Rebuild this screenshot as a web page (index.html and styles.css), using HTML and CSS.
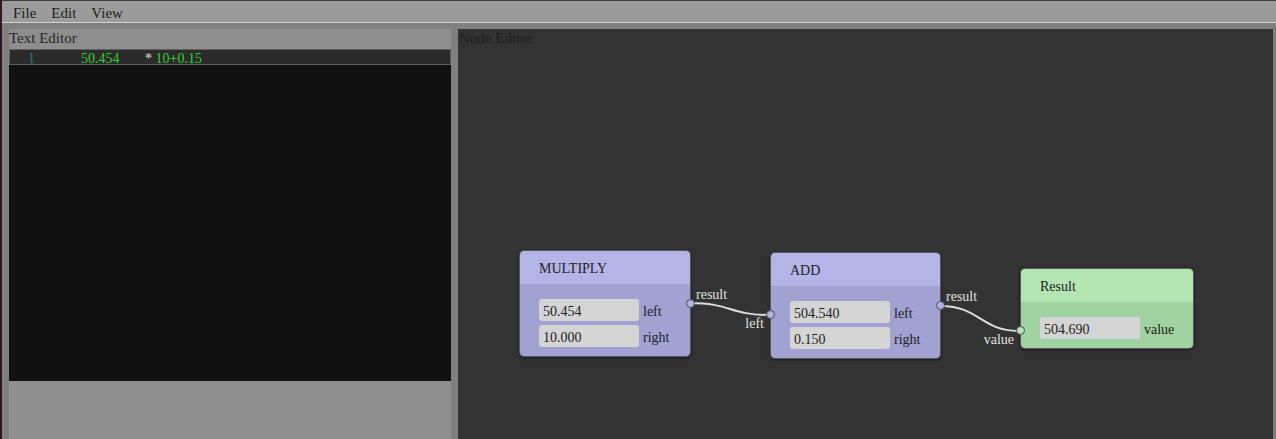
FILE: index.html
```html
<!DOCTYPE html>
<html>
<head>
<meta charset="utf-8">
<link rel="stylesheet" href="styles.css">
</head>
<body>
<div class="window">
  <div class="edge"></div>
  <div class="app">
    <nav class="menubar">
      <span class="menu-item">File</span>
      <span class="menu-item">Edit</span>
      <span class="menu-item">View</span>
    </nav>
    <main class="workspace">
      <section class="panel text-editor">
        <div class="panel-title">Text Editor</div>
        <div class="code-row">
          <span class="line-no">1</span>
          <span class="line-value">50.454</span>
          <span class="line-code"><span class="op">*</span> 10+0.15</span>
        </div>
        <div class="code-area"></div>
      </section>
      <section class="panel node-editor">
        <div class="panel-title">Node Editor</div>
        <div class="canvas">
          <svg class="wires" width="815" height="410">
            <path d="M232.5 274 C 272 274, 272 286, 311.5 286" />
            <path d="M482.5 277 C 522 277, 522 302, 562 302" />
          </svg>

          <div class="node node-op node-multiply">
            <div class="node-header">MULTIPLY</div>
            <div class="node-body">
              <div class="field-row"><span class="field">50.454</span><span class="field-label">left</span></div>
              <div class="field-row"><span class="field">10.000</span><span class="field-label">right</span></div>
            </div>
            <span class="port port-out"></span>
            <span class="port-label out-label">result</span>
          </div>

          <div class="node node-op node-add">
            <div class="node-header">ADD</div>
            <div class="node-body">
              <div class="field-row"><span class="field">504.540</span><span class="field-label">left</span></div>
              <div class="field-row"><span class="field">0.150</span><span class="field-label">right</span></div>
            </div>
            <span class="port port-in"></span>
            <span class="port-label in-label">left</span>
            <span class="port port-out"></span>
            <span class="port-label out-label">result</span>
          </div>

          <div class="node node-result">
            <div class="node-header">Result</div>
            <div class="node-body">
              <div class="field-row"><span class="field">504.690</span><span class="field-label">value</span></div>
            </div>
            <span class="port port-in"></span>
            <span class="port-label in-label">value</span>
          </div>
        </div>
      </section>
    </main>
  </div>
</div>
</body>
</html>
```

FILE: styles.css
```css
* { box-sizing: border-box; }

html, body {
  margin: 0;
  padding: 0;
  height: 100%;
  overflow: hidden;
  background: #808080;
  font-family: "Liberation Serif", "Times New Roman", serif;
  font-size: 14px;
  color: #222;
}

.window {
  display: flex;
  height: 100vh;
}

.edge {
  width: 2px;
  flex: none;
  background: #2c1c27;
}

.app {
  flex: 1;
  display: flex;
  flex-direction: column;
  min-width: 0;
}

.menubar {
  display: flex;
  gap: 15px;
  height: 23px;
  padding: 0 0 0 11px;
  background: #9b9b9b;
  border-top: 1px solid #3d3d3a;
  border-bottom: 1px solid #d2d2d2;
  font-size: 15px;
  line-height: 25px;
  color: #1e1e1e;
}

.workspace {
  flex: 1;
  display: grid;
  grid-template-columns: 442px 1fr;
  gap: 7px;
  padding: 6px 3px 0 7px;
  min-height: 0;
}

.panel {
  display: flex;
  flex-direction: column;
  min-height: 0;
}

.panel-title {
  height: 20px;
  font-size: 15px;
  line-height: 19px;
  white-space: nowrap;
}

.text-editor {
  background: #8e8e8e;
}

.text-editor .panel-title {
  color: #252525;
}

.code-row {
  display: flex;
  height: 16px;
  background: #2b2b2b;
  border: 1px solid #5e5e5e;
  line-height: 18px;
  color: #2ad42a;
  white-space: nowrap;
}

.line-no {
  width: 71px;
  padding-left: 18px;
  color: #1f7f7f;
}

.line-value {
  width: 64px;
}

.line-code .op {
  color: #e0e0e0;
}

.code-area {
  height: 316px;
  background: #111111;
}

.node-editor {
  background: #333333;
  position: relative;
}

.node-editor .panel-title {
  position: absolute;
  left: 1px;
  top: 0;
  color: #1f1f1f;
}

.canvas {
  position: relative;
  flex: 1;
}

.wires {
  position: absolute;
  left: 0;
  top: 0;
  overflow: visible;
}

.wires path {
  fill: none;
  stroke: #dcdcdc;
  stroke-width: 2;
}

.node {
  position: absolute;
  border: 1px solid #585858;
  border-radius: 5px;
  box-shadow: 0 1px 3px rgba(0, 0, 0, 0.55);
  overflow: visible;
}

.node-header {
  height: 33px;
  padding-left: 19px;
  line-height: 36px;
  border-radius: 4px 4px 0 0;
  color: #222;
}

.node-body {
  display: flex;
  flex-direction: column;
  gap: 4px;
  padding: 15px 0 9px 19px;
  border-radius: 0 0 4px 4px;
}

.node-op .node-header { background: #b4b4e6; }
.node-op .node-body { background: #a1a1d2; }
.node-result .node-header { background: #b4e6b4; }
.node-result .node-body { background: #a1d2a1; }

.field-row {
  display: flex;
  align-items: center;
  gap: 4px;
}

.field {
  width: 100px;
  height: 22px;
  padding: 3px 0 0 4px;
  line-height: 19px;
  background: #d4d4d4;
  border-radius: 3px;
  color: #222;
}

.field-label {
  padding-top: 4px;
  color: #222;
}

.node-multiply { left: 61px; top: 221px; width: 172px; }
.node-add { left: 312px; top: 223px; width: 171px; }
.node-result { left: 562px; top: 239px; width: 174px; }

.port {
  position: absolute;
  width: 9px;
  height: 9px;
  border-radius: 50%;
  border: 1px solid #4a4a4a;
}

.node-op .port { background: #b2b2e2; }
.node-result .port { background: #b4e6b4; }

.port-out { right: -5px; top: 48px; }
.port-in { left: -5px; top: 57px; }

.port-label {
  position: absolute;
  line-height: 16px;
  color: #e2e2e2;
  white-space: nowrap;
}

.out-label { left: calc(100% + 6px); top: 36px; }
.in-label { right: calc(100% + 7px); top: 63px; }
```
